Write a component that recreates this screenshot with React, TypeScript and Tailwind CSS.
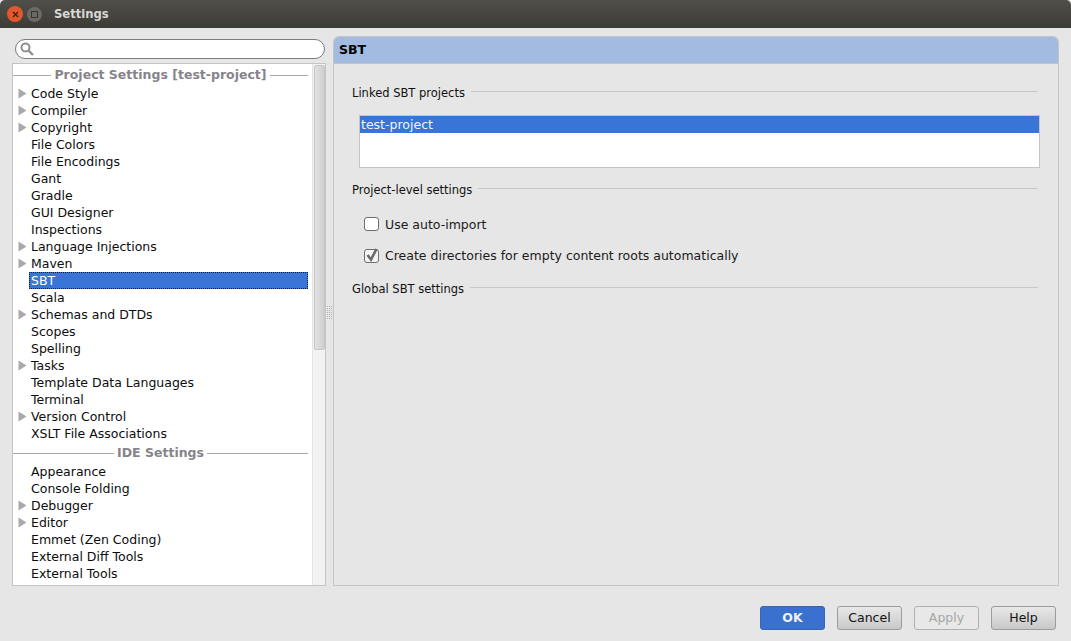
const font = "[font-family:'DejaVu_Sans',sans-serif]";

type Row = { name: string; arrow?: boolean };

const projectRows: Row[] = [
  { name: "Code Style", arrow: true },
  { name: "Compiler", arrow: true },
  { name: "Copyright", arrow: true },
  { name: "File Colors" },
  { name: "File Encodings" },
  { name: "Gant" },
  { name: "Gradle" },
  { name: "GUI Designer" },
  { name: "Inspections" },
  { name: "Language Injections", arrow: true },
  { name: "Maven", arrow: true },
  { name: "SBT" },
  { name: "Scala" },
  { name: "Schemas and DTDs", arrow: true },
  { name: "Scopes" },
  { name: "Spelling" },
  { name: "Tasks", arrow: true },
  { name: "Template Data Languages" },
  { name: "Terminal" },
  { name: "Version Control", arrow: true },
  { name: "XSLT File Associations" },
];

const ideRows: Row[] = [
  { name: "Appearance" },
  { name: "Console Folding" },
  { name: "Debugger", arrow: true },
  { name: "Editor", arrow: true },
  { name: "Emmet (Zen Coding)" },
  { name: "External Diff Tools" },
  { name: "External Tools" },
];

function TreeRow({ row }: { row: Row }) {
  const selected = row.name === "SBT";
  return (
    <div className="flex h-[17px] items-center">
      <div className="flex w-[16px] shrink-0 justify-start pl-[5px]">
        {row.arrow && (
          <svg width="9" height="11" viewBox="0 0 9 11">
            <path d="M0.5 0.5 L8.5 5.5 L0.5 10.5 Z" fill="#a9a9a9" />
          </svg>
        )}
      </div>
      <div
        className={
          selected
            ? "flex h-[17px] w-[279px] items-center border border-dotted border-[#0a1f45] bg-[#3875d7] pl-[1px] pt-[1px] text-white"
            : "flex h-[17px] items-center pl-[2px] pt-[1px] text-[#0c0c0c]"
        }
      >
        {row.name}
      </div>
    </div>
  );
}

function TreeHeader({ title }: { title: string }) {
  return (
    <div className="flex h-[21px] w-[295px] items-center gap-[2px] pt-[1px]">
      <div className="h-px flex-1 bg-[#a8a8a8]" />
      <span className="px-[1px] pt-[1px] font-bold text-[#86848a]">{title}</span>
      <div className="h-px flex-1 bg-[#a8a8a8]" />
    </div>
  );
}

function SectionTitle({ title }: { title: string }) {
  return (
    <div className="flex h-[16px] items-start gap-[6px] text-[11.5px] leading-[16px] text-[#111]">
      <span className="pt-[1px]">{title}</span>
      <div className="mt-[7px] h-px flex-1 bg-[#c8c8c8]" />
    </div>
  );
}

function Btn({ label, kind }: { label: string; kind?: "primary" | "disabled" }) {
  const cls =
    kind === "primary"
      ? "border-[#3a66ad] bg-[#3a70d0] font-bold text-[#f0f0f0]"
      : kind === "disabled"
        ? "border-[#b0b0b0] bg-[#e8e8e8] text-[#a6a6a6]"
        : "border-[#9c9c9c] bg-gradient-to-b from-[#e8e8e8] to-[#c8c8c8] text-[#111]";
  return (
    <div className={"flex h-[24px] w-[65px] items-center justify-center rounded-[3px] border text-[12.5px] " + cls}>
      {label}
    </div>
  );
}

export default function App() {
  return (
    <div className={"flex h-[641px] w-[1071px] flex-col overflow-hidden bg-[#e6e6e6] text-[12.5px] " + font}>
      {/* title bar */}
      <div className="flex h-[28px] shrink-0 items-center rounded-t-[5px] bg-gradient-to-b from-[#504f49] to-[#3c3b37]">
        <div className="ml-[7px] flex h-[16px] w-[16px] items-center justify-center rounded-full bg-[#e2582c]">
          <svg width="7" height="7" viewBox="0 0 7 7">
            <path d="M1 1 L6 6 M6 1 L1 6" stroke="#40201a" strokeWidth="1.4" />
          </svg>
        </div>
        <div className="ml-[4px] flex h-[15px] w-[15px] items-center justify-center rounded-full bg-[#6a6964]">
          <div className="h-[7px] w-[7px] border border-[#35342f]" />
        </div>
        <span className="ml-[12px] pt-[1px] text-[11.6px] font-bold text-[#d8d8d4]">Settings</span>
      </div>

      <div className="flex h-[578px] shrink-0">
        {/* left column */}
        <div className="ml-[12px] flex w-[314px] shrink-0 flex-col pt-[11px]">
          <div className="ml-[3px] flex h-[20px] w-[310px] items-center rounded-full border border-[#7b7b7b] bg-white pl-[4px]">
            <svg width="14" height="14" viewBox="0 0 14 14">
              <circle cx="5.5" cy="5.5" r="4" fill="none" stroke="#8e8e8e" strokeWidth="2" />
              <path d="M8.5 8.5 L13 13" stroke="#8e8e8e" strokeWidth="2.4" />
            </svg>
          </div>
          <div className="mt-[4px] flex h-[523px] overflow-hidden border border-[#c4c4c4] bg-white">
            <div className="w-[299px] shrink-0">
              <TreeHeader title="Project Settings [test-project]" />
              {projectRows.map((r) => (
                <TreeRow key={r.name} row={r} />
              ))}
              <TreeHeader title="IDE Settings" />
              {ideRows.map((r) => (
                <TreeRow key={r.name} row={r} />
              ))}
            </div>
            <div className="flex-1 border-l border-[#e4e4e4] bg-[#f2f2f2] pl-[1px] pt-[1px]">
              <div className="h-[285px] w-[11px] rounded-[2px] border border-[#c6c6c6] bg-gradient-to-r from-[#e2e2e2] to-[#cfcfcf]" />
            </div>
          </div>
        </div>

        {/* splitter */}
        <div className="flex w-[7px] shrink-0 items-center justify-center pb-[8px]">
          <svg width="5" height="14" viewBox="0 0 5 14">
            {[0, 2, 4, 6, 8, 10, 12].map((y) =>
              [0, 2, 4].map((x) => <rect key={x + "-" + y} x={x} y={y} width="1" height="1" fill="#b4b4b4" />),
            )}
          </svg>
        </div>

        {/* right panel */}
        <div className="mt-[8px] flex h-[550px] w-[726px] shrink-0 flex-col overflow-hidden rounded-t-[6px] border border-[#c4c4c4]">
          <div className="flex h-[27px] shrink-0 items-center border-b border-[#c0c4cc] bg-[#a3bbe0] pl-[5px] pt-[1px] font-bold text-black">
            SBT
          </div>
          <div className="flex flex-col pl-[18px] pr-[20px] pt-[20px]">
            <SectionTitle title="Linked SBT projects" />
            <div className="ml-[7px] mr-[-2px] mt-[15px] h-[53px] border border-[#c4c4c4] bg-white">
              <div className="flex h-[17px] items-center bg-[#3875d7] pl-[1px] pt-[1px] text-[#f4f4f4]">test-project</div>
            </div>
            <div className="mt-[13px]">
              <SectionTitle title="Project-level settings" />
            </div>
            <div className="mt-[20px] flex h-[16px] items-center pl-[12px] text-[#1a1a1a]">
              <div className="mb-[2px] h-[14px] w-[15px] rounded-[3px] border border-[#6e6e6e] bg-white" />
              <span className="ml-[6px]">Use auto-import</span>
            </div>
            <div className="mt-[15px] flex h-[16px] items-center pl-[12px] text-[#1a1a1a]">
              <div className="relative h-[14px] w-[15px] rounded-[3px] border border-[#6e6e6e] bg-[#f4f4f4]">
                <svg className="absolute -top-[3px] left-[0px]" width="14" height="16" viewBox="0 0 14 16">
                  <path d="M2.5 8 L6 12.5 L11.5 2" fill="none" stroke="#6a6a6a" strokeWidth="2.6" />
                </svg>
              </div>
              <span className="ml-[6px]">Create directories for empty content roots automatically</span>
            </div>
            <div className="mt-[16px]">
              <SectionTitle title="Global SBT settings" />
            </div>
          </div>
        </div>
      </div>

      {/* footer buttons */}
      <div className="flex justify-end gap-[12px] pr-[15px]">
        <Btn label="OK" kind="primary" />
        <Btn label="Cancel" />
        <Btn label="Apply" kind="disabled" />
        <Btn label="Help" />
      </div>
    </div>
  );
}
